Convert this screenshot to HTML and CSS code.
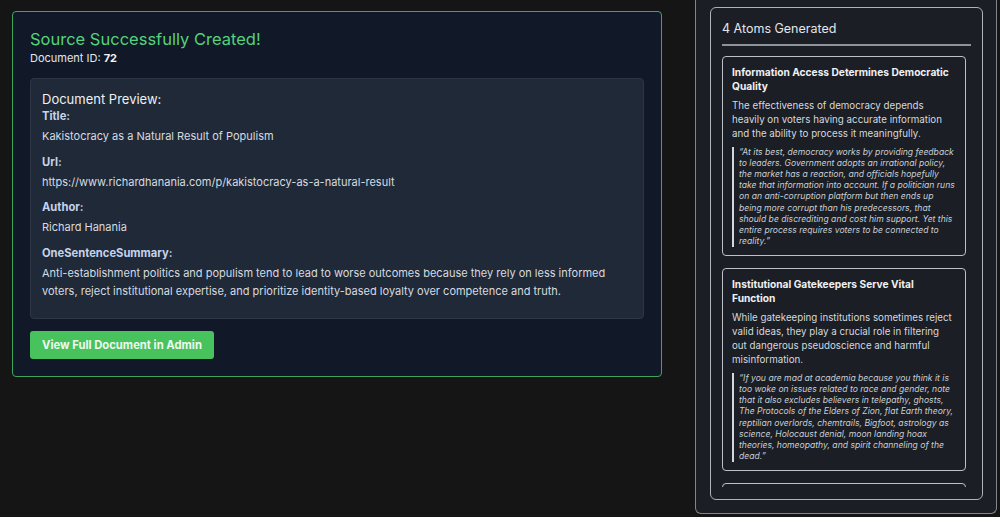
FILE: index.html
```html
<!DOCTYPE html>
<html lang="en">
<head>
<meta charset="utf-8">
<title>Source Created</title>
<link rel="stylesheet" href="styles.css">
</head>
<body>
<div class="page">
  <main class="main">
    <section class="success-card">
      <h1 class="success-title">Source Successfully Created!</h1>
      <p class="doc-id">Document ID: <strong>72</strong></p>
      <div class="preview">
        <h2 class="preview-title">Document Preview:</h2>
        <div class="field">
          <div class="field-label">Title:</div>
          <div class="field-value">Kakistocracy as a Natural Result of Populism</div>
        </div>
        <div class="field">
          <div class="field-label">Url:</div>
          <div class="field-value">https://www.richardhanania.com/p/kakistocracy-as-a-natural-result</div>
        </div>
        <div class="field">
          <div class="field-label">Author:</div>
          <div class="field-value">Richard Hanania</div>
        </div>
        <div class="field">
          <div class="field-label">OneSentenceSummary:</div>
          <div class="field-value">Anti-establishment politics and populism tend to lead to worse outcomes because they rely on less informed voters, reject institutional expertise, and prioritize identity-based loyalty over competence and truth.</div>
        </div>
      </div>
      <a class="btn-admin" href="#">View Full Document in Admin</a>
    </section>
  </main>
  <aside class="sidebar">
    <div class="atoms-panel">
      <h2 class="atoms-header">4 Atoms Generated</h2>
      <div class="atoms-list">
        <article class="atom">
          <h3 class="atom-title">Information Access Determines Democratic Quality</h3>
          <p class="atom-desc">The effectiveness of democracy depends heavily on voters having accurate information and the ability to process it meaningfully.</p>
          <blockquote class="atom-quote">“At its best, democracy works by providing feedback<br>to leaders. Government adopts an irrational policy,<br>the market has a reaction, and officials hopefully<br>take that information into account. If a politician runs<br>on an anti-corruption platform but then ends up<br>being more corrupt than his predecessors, that<br>should be discrediting and cost him support. Yet this<br>entire process requires voters to be connected to<br>reality.”</blockquote>
        </article>
        <article class="atom">
          <h3 class="atom-title">Institutional Gatekeepers Serve Vital Function</h3>
          <p class="atom-desc">While gatekeeping institutions sometimes reject valid ideas, they play a crucial role in filtering out dangerous pseudoscience and harmful misinformation.</p>
          <blockquote class="atom-quote">“If you are mad at academia because you think it is<br>too woke on issues related to race and gender, note<br>that it also excludes believers in telepathy, ghosts,<br>The Protocols of the Elders of Zion, flat Earth theory,<br>reptilian overlords, chemtrails, Bigfoot, astrology as<br>science, Holocaust denial, moon landing hoax<br>theories, homeopathy, and spirit channeling of the<br>dead.”</blockquote>
        </article>
        <article class="atom atom-placeholder"></article>
      </div>
    </div>
  </aside>
</div>
</body>
</html>
```

FILE: styles.css
```css
* { box-sizing: border-box; }
html, body { margin: 0; padding: 0; }
body {
  background: #151515;
  font-family: Inter, "Liberation Sans", sans-serif;
  color: #d1d5db;
  height: 517px;
  overflow: hidden;
}
.page {
  display: flex;
  align-items: flex-start;
  padding-left: 12px;
}
.main {
  width: 650px;
  padding-top: 11px;
}
.success-card {
  background: #111827;
  border: 1px solid #3fa45e;
  border-radius: 4px;
  padding: 17px;
}
.success-title {
  margin: 0;
  font-size: 16.5px;
  line-height: 21px;
  font-weight: 400;
  color: #54d27c;
}
.doc-id {
  margin: 0 0 12px;
  font-size: 11px;
  line-height: 16px;
  color: #e5e7eb;
}
.doc-id strong { font-weight: 700; color: #f3f4f6; }
.preview {
  background: #1f2937;
  border: 1px solid #2c3646;
  border-radius: 4px;
  padding: 11px 11px 10px;
}
.preview-title {
  margin: 0;
  font-size: 13px;
  line-height: 18px;
  font-weight: 400;
  color: #eef0f3;
}
.field { margin-bottom: 8.5px; }
.field-label {
  font-size: 11.2px;
  line-height: 16px;
  font-weight: 700;
  color: #c6d2ea;
  margin-bottom: 3px;
}
.field-value {
  font-size: 11px;
  line-height: 18px;
  color: #d7dbe0;
}
.btn-admin {
  display: inline-block;
  margin-top: 12px;
  background: #48c25d;
  color: #eef8ef;
  text-decoration: none;
  font-size: 11.25px;
  line-height: 15px;
  font-weight: 700;
  padding: 6.5px 12px;
  border-radius: 3px;
}
.sidebar {
  margin-left: 33px;
  width: 302px;
  height: 514px;
  background: #1b1e25;
  border: 1px solid #80858e;
  border-top: none;
  border-radius: 0 0 6px 6px;
  padding: 7px 13px 14px 14px;
}
.atoms-panel {
  height: 493px;
  display: flex;
  flex-direction: column;
  background: #1b1e25;
  border: 1px solid #aeb2ba;
  border-radius: 6px;
  padding: 12px 11px 12px;
}
.atoms-header {
  margin: 0 0 10px;
  font-size: 12.5px;
  line-height: 18px;
  font-weight: 400;
  color: #e4e6ea;
  padding-bottom: 6px;
  border-bottom: 2px solid #8e939b;
}
.atoms-list {
  flex: 1;
  overflow: hidden;
  padding-right: 5px;
  display: flex;
  flex-direction: column;
  gap: 12px;
}
.atom {
  flex-shrink: 0;
  border: 1px solid #bcc0c7;
  border-radius: 4px;
  padding: 8px 9px 8px 9px;
}
.atom-placeholder { height: 80px; }
.atom-title {
  margin: 0 0 6px;
  font-size: 10.2px;
  line-height: 14px;
  font-weight: 700;
  color: #eef0f3;
}
.atom-desc {
  margin: 0 0 5.5px;
  font-size: 9.75px;
  line-height: 14px;
  color: #d6d9de;
}
.atom-quote {
  margin: 0;
  border-left: 2px solid #d4d7dc;
  padding-left: 5px;
  font-size: 8.6px;
  line-height: 11.2px;
  font-style: italic;
  white-space: nowrap;
  color: #caced4;
}
```
